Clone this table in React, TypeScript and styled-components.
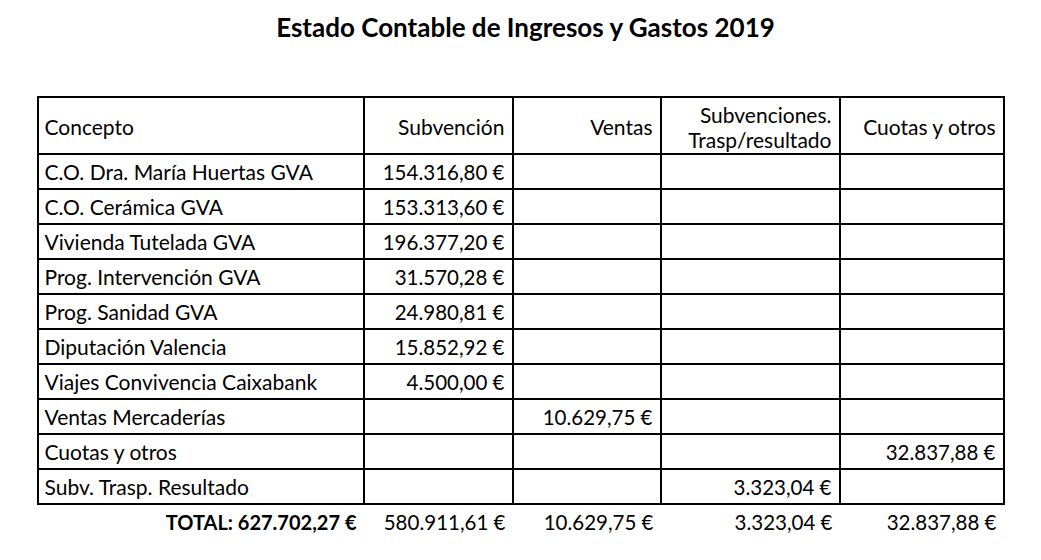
import React from "react";
import styled, { createGlobalStyle } from "styled-components";

const Global = createGlobalStyle`
  html, body { margin: 0; padding: 0; background: #fff; }
  body { font-family: Lato, "Liberation Sans", sans-serif; color: #000; }
`;

const Page = styled.div`
  width: 1041px;
  height: 560px;
  box-sizing: border-box;
  padding-top: 10px;
`;

const Title = styled.h1`
  margin: 0;
  padding-left: 10px;
  text-align: center;
  font-size: 26px;
  font-weight: 700;
  line-height: 34px;
  height: 86px;
`;

const Table = styled.table`
  border-collapse: collapse;
  table-layout: fixed;
  width: 966px;
  margin: 0 auto;
  font-size: 21px;
`;

const Th = styled.th<{ $align?: "left" | "right" }>`
  border: 2px solid #000;
  height: 53px;
  padding: 2px 7px 0 6px;
  font-weight: 400;
  font-size: 21px;
  text-align: ${(p) => p.$align ?? "right"};
  vertical-align: middle;
  line-height: 25px;
`;

const Td = styled.td<{ $align?: "left" | "right"; $num?: boolean }>`
  border: 2px solid #000;
  height: 33px;
  padding: 0 7px 0 6px;
  text-align: ${(p) => p.$align ?? "right"};
  font-size: ${(p) => (p.$num ? "20.5px" : "21px")};
  vertical-align: middle;
  line-height: 24px;
  white-space: nowrap;
`;

const TotalCell = styled.td<{ $bold?: boolean }>`
  border: none;
  height: 34px;
  padding: 0 7px 0 6px;
  text-align: right;
  font-weight: ${(p) => (p.$bold ? 700 : 400)};
  font-size: ${(p) => (p.$bold ? "20px" : "20.5px")};
  white-space: nowrap;
  vertical-align: middle;
`;

type Row = { concepto: string; vals: (string | null)[] };

const rows: Row[] = [
  { concepto: "C.O. Dra. María Huertas GVA", vals: ["154.316,80 €", null, null, null] },
  { concepto: "C.O. Cerámica GVA", vals: ["153.313,60 €", null, null, null] },
  { concepto: "Vivienda Tutelada GVA", vals: ["196.377,20 €", null, null, null] },
  { concepto: "Prog. Intervención GVA", vals: ["31.570,28 €", null, null, null] },
  { concepto: "Prog. Sanidad GVA", vals: ["24.980,81 €", null, null, null] },
  { concepto: "Diputación Valencia", vals: ["15.852,92 €", null, null, null] },
  { concepto: "Viajes Convivencia Caixabank", vals: ["4.500,00 €", null, null, null] },
  { concepto: "Ventas Mercaderías", vals: [null, "10.629,75 €", null, null] },
  { concepto: "Cuotas y otros", vals: [null, null, null, "32.837,88 €"] },
  { concepto: "Subv. Trasp. Resultado", vals: [null, null, "3.323,04 €", null] },
];

const widths = [326, 149, 148, 179, 164];

export default function App() {
  return (
    <Page>
      <Global />
      <Title>Estado Contable de Ingresos y Gastos 2019</Title>
      <Table>
        <colgroup>
          {widths.map((w, i) => (
            <col key={i} style={{ width: w }} />
          ))}
        </colgroup>
        <thead>
          <tr>
            <Th $align="left">Concepto</Th>
            <Th>Subvención</Th>
            <Th>Ventas</Th>
            <Th>
              Subvenciones.
              <br />
              Trasp/resultado
            </Th>
            <Th>Cuotas y otros</Th>
          </tr>
        </thead>
        <tbody>
          {rows.map((r) => (
            <tr key={r.concepto}>
              <Td $align="left">{r.concepto}</Td>
              {r.vals.map((v, i) => (
                <Td key={i} $num>
                  {v}
                </Td>
              ))}
            </tr>
          ))}
        </tbody>
        <tfoot>
          <tr>
            <TotalCell $bold>TOTAL: 627.702,27 €</TotalCell>
            <TotalCell>580.911,61 €</TotalCell>
            <TotalCell>10.629,75 €</TotalCell>
            <TotalCell>3.323,04 €</TotalCell>
            <TotalCell>32.837,88 €</TotalCell>
          </tr>
        </tfoot>
      </Table>
    </Page>
  );
}
